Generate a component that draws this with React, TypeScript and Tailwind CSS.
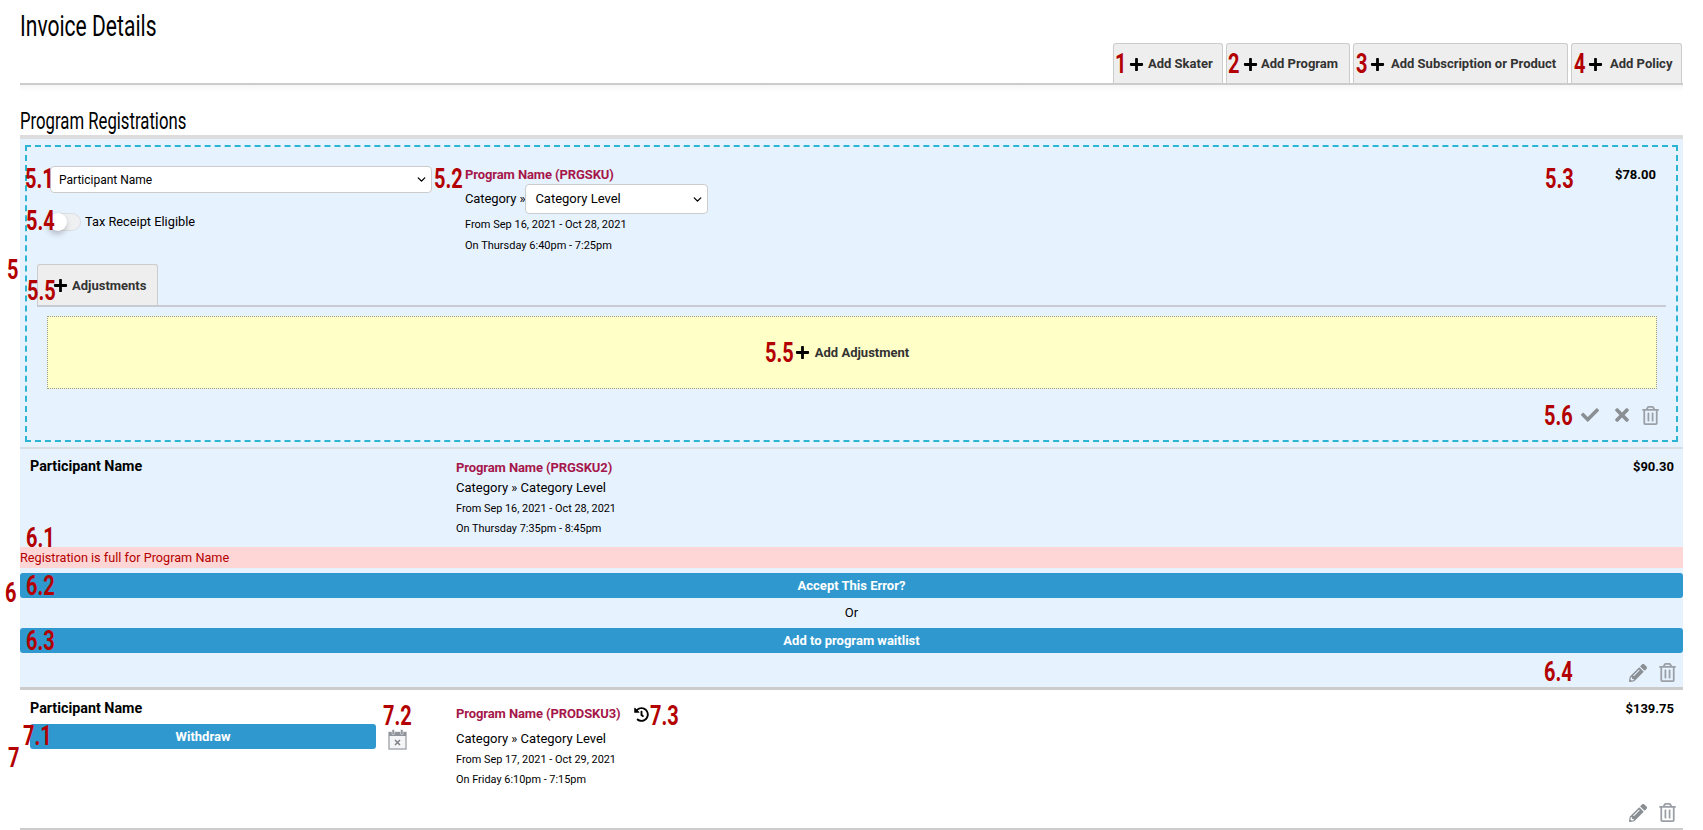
import { FaCheck, FaHistory, FaPencilAlt, FaPlus, FaRegTrashAlt, FaTimes } from "react-icons/fa"
import { ChevronDown } from "lucide-react"

type NoteProps = {
    text: string
    className: string
}

// the red numbers lie over the page, they are annotations on the screenshot
function Note(props: NoteProps) {
    return (
        <span className={`absolute origin-left scale-x-[0.74] text-[27px] leading-[19px] font-bold text-[#b30000] ${props.className}`}>
            {props.text}
        </span>
    )
}

function TabButton(props: { label: string; className: string; gap: string }) {
    return (
        <div className={`h-10 flex items-center bg-[#eeeeee] border border-b-0 border-[#cccccc] rounded-t-[3px] ${props.className}`}>
            <FaPlus className="text-black text-[15px] shrink-0 mt-[1px]" />
            <span className={`mt-[1px] text-[13px] font-bold text-[#333333] whitespace-nowrap ${props.gap}`}>{props.label}</span>
        </div>
    )
}

function ProgramInfo(props: { name: string; from: string; on: string; className?: string }) {
    return (
        <div className={`flex flex-col items-start ${props.className ?? ""}`}>
            <span className="text-[13px] leading-5 font-bold text-[#a5174a] tracking-[-0.1px]">{props.name}</span>
            <span className="text-[13px] leading-5 text-black">Category » Category Level</span>
            <span className="mt-[1px] text-[10.9px] leading-5 text-black">{props.from}</span>
            <span className="text-[10.9px] leading-[19px] text-black">{props.on}</span>
        </div>
    )
}

function TrashIcon() {
    return <FaRegTrashAlt className="text-[#9aa0a6] text-[19px]" />
}

function EditActions() {
    return (
        <div className="flex justify-end items-center gap-[11px] pr-[6px]">
            <FaPencilAlt className="text-[#8a8f94] text-[18px]" />
            <TrashIcon />
        </div>
    )
}

function BlueButton(props: { label: string; className: string }) {
    return (
        <div className={`h-[25px] flex justify-center items-center bg-[#2f99cf] rounded-[3px] text-white text-[13px] font-bold ${props.className}`}>
            {props.label}
        </div>
    )
}

export default function App() {
    return (
        <div className="relative w-full h-[830px] overflow-hidden bg-white px-5 font-['Roboto',sans-serif]">
            <div className="h-[43px] pt-[9px]">
                <h1 className="inline-block origin-left scale-x-[0.727] text-[29px] leading-[34px] whitespace-nowrap text-black">Invoice Details</h1>
            </div>

            <div className="flex justify-end gap-[3px] pr-[1px] border-b-2 border-[#cccccc]">
                <TabButton label="Add Skater" className="w-[110px] pl-[15px]" gap="ml-[4px]" />
                <TabButton label="Add Program" className="w-[124px] pl-[16px]" gap="ml-[3px]" />
                <TabButton label="Add Subscription or Product" className="w-[215px] pl-[16px]" gap="ml-[6px]" />
                <TabButton label="Add Policy" className="w-[111px] pl-[16px]" gap="ml-[7px]" />
            </div>
            <div className="h-[7px] bg-gradient-to-b from-[#f6f6f6] to-white"></div>

            <div className="h-[43px] pt-[16px]">
                <h2 className="inline-block origin-left scale-x-[0.727] text-[23px] leading-[27px] whitespace-nowrap text-black">Program Registrations</h2>
            </div>

            <div className="h-[555px] bg-[#e7f2ff] border-t-4 border-b-[3px] border-t-[#dddddd] border-b-[#cccccc] pt-[6px] flex flex-col">
                <div className="mx-[5px] h-[297px] border-2 border-dashed border-[#2cb5d2] flex flex-col">
                    <div className="flex h-[117px] pt-[19px] pl-[23px] pr-[20px]">
                        <div className="w-[382px] flex flex-col items-stretch">
                            <div className="h-[27px] flex justify-between items-center bg-white border border-[#cccccc] rounded-[4px] pl-[8px] pr-[3px]">
                                <span className="text-[12px] text-black">Participant Name</span>
                                <ChevronDown size={13} strokeWidth={2.5} className="text-black" />
                            </div>
                            <div className="mt-[20px] flex items-center">
                                <div className="relative w-[31px] h-[18px] rounded-full bg-[#eef0f2] border border-[#dcdfe3]">
                                    <div className="absolute left-[-2px] top-[-1px] w-[18px] h-[18px] rounded-full bg-white shadow-[-1px_3px_6px_rgba(0,0,0,0.25)]"></div>
                                </div>
                                <span className="ml-[4px] mt-[-1px] text-[12.8px] text-black">Tax Receipt Eligible</span>
                            </div>
                        </div>
                        <div className="ml-[33px] flex flex-col items-start">
                            <span className="h-[19px] mt-[-1px] text-[13px] leading-[19px] font-bold text-[#a5174a] tracking-[-0.1px]">Program Name (PRGSKU)</span>
                            <div className="flex items-center">
                                <span className="text-[13px] tracking-[-0.1px] text-black">Category »</span>
                                <div className="w-[183px] h-[30px] flex justify-between items-center bg-white border border-[#cccccc] rounded-[4px] pl-[9px] pr-[3px]">
                                    <span className="text-[13px] text-black">Category Level</span>
                                    <ChevronDown size={13} strokeWidth={2.5} className="text-black" />
                                </div>
                            </div>
                            <span className="text-[11px] leading-[21px] text-black">From Sep 16, 2021 - Oct 28, 2021</span>
                            <span className="text-[11px] leading-[21px] text-black">On Thursday 6:40pm - 7:25pm</span>
                        </div>
                        <span className="ml-auto mt-[-1px] text-[13px] leading-[19px] font-bold text-black">$78.00</span>
                    </div>

                    <div className="mx-[10px] flex border-b-2 border-[#c8ccd2]">
                        <div className="w-[121px] h-[41px] flex items-center bg-[#eeeeee] border border-b-0 border-[#cccccc] rounded-t-[3px] pl-[15px]">
                            <FaPlus className="text-black text-[15px] mt-[1px]" />
                            <span className="ml-[4px] mt-[1px] text-[13px] font-bold text-[#333333]">Adjustments</span>
                        </div>
                    </div>

                    <div className="mt-[9px] ml-[20px] mr-[19px] h-[73px] flex justify-center items-center bg-[#ffffc8] border border-dotted border-[#999999]">
                        <div className="flex items-center">
                            <FaPlus className="text-black text-[15px]" />
                            <span className="ml-[5px] text-[13px] font-bold text-[#333333]">Add Adjustment</span>
                        </div>
                    </div>

                    <div className="mt-[16px] flex justify-end items-center pr-[16px]">
                        <FaCheck className="text-[#8a8f94] text-[18px]" />
                        <FaTimes className="ml-[13px] text-[#8a8f94] text-[20px]" />
                        <div className="ml-[9px]"><TrashIcon /></div>
                    </div>
                </div>

                <div className="mt-[5px] h-[100px] border-t-2 border-[#d8dde4] flex pl-[10px] pr-[9px] pt-[9px]">
                    <span className="w-[426px] mt-[-1px] text-[14.3px] leading-[18px] font-bold text-black">Participant Name</span>
                    <ProgramInfo name="Program Name (PRGSKU2)" from="From Sep 16, 2021 - Oct 28, 2021" on="On Thursday 7:35pm - 8:45pm" />
                    <span className="ml-auto text-[13px] leading-[18px] font-bold text-black">$90.30</span>
                </div>

                <div className="h-[21px] flex items-center bg-[#ffd6d6] text-[12.7px] text-[#b30000]">Registration is full for Program Name</div>
                <BlueButton label="Accept This Error?" className="mt-[5px]" />
                <div className="h-[30px] flex justify-center items-center text-[13px] text-black">Or</div>
                <BlueButton label="Add to program waitlist" className="" />
                <div className="mt-[10px]"><EditActions /></div>
            </div>

            <div className="h-[140px] border-b-2 border-[#cccccc] flex flex-col">
                <div className="flex pl-[10px] pr-[9px] pt-[9px]">
                    <div className="w-[346px] flex flex-col items-stretch">
                        <span className="text-[14.3px] leading-[18px] font-bold text-black">Participant Name</span>
                        <BlueButton label="Withdraw" className="mt-[7px]" />
                    </div>
                    <svg width="19" height="21" viewBox="0 0 19 21" className="ml-[12px] mt-[30px]">
                        <rect x="1" y="3.5" width="17" height="16.5" fill="#f4f5f6" stroke="#a8adb2" strokeWidth="1.5" />
                        <rect x="1" y="3" width="17" height="4" fill="#8f949a" />
                        <rect x="4" y="0.5" width="2.5" height="5" rx="1" fill="#8f949a" stroke="#ffffff" strokeWidth="0.5" />
                        <rect x="12.5" y="0.5" width="2.5" height="5" rx="1" fill="#8f949a" stroke="#ffffff" strokeWidth="0.5" />
                        <path d="M7 11l5 5M12 11l-5 5" stroke="#7c8187" strokeWidth="1.5" />
                    </svg>
                    <div className="ml-[49px] mt-[5px] flex flex-col items-start">
                        <div className="flex items-center h-[20px]">
                            <span className="text-[13px] font-bold text-[#a5174a] tracking-[-0.1px]">Program Name (PRODSKU3)</span>
                            <FaHistory className="ml-[13px] text-black text-[15px]" />
                        </div>
                        <span className="mt-[5px] text-[13px] leading-5 text-black">Category » Category Level</span>
                        <span className="mt-[1px] text-[10.9px] leading-5 text-black">From Sep 17, 2021 - Oct 29, 2021</span>
                        <span className="text-[10.9px] leading-5 text-black">On Friday 6:10pm - 7:15pm</span>
                    </div>
                    <span className="ml-auto text-[13px] leading-[20px] font-bold text-black">$139.75</span>
                </div>
                <div className="mt-auto mb-[6px]"><EditActions /></div>
            </div>

            <Note text="1" className="left-[1115px] top-[55px]" />
            <Note text="2" className="left-[1228px] top-[55px]" />
            <Note text="3" className="left-[1356px] top-[55px]" />
            <Note text="4" className="left-[1574px] top-[55px]" />
            <Note text="5.1" className="left-[25px] top-[170px]" />
            <Note text="5.2" className="left-[434px] top-[170px]" />
            <Note text="5.3" className="left-[1545px] top-[170px]" />
            <Note text="5.4" className="left-[26px] top-[212px]" />
            <Note text="5" className="left-[7px] top-[261px]" />
            <Note text="5.5" className="left-[27px] top-[282px]" />
            <Note text="5.5" className="left-[765px] top-[344px]" />
            <Note text="5.6" className="left-[1544px] top-[407px]" />
            <Note text="6.1" className="left-[26px] top-[529px]" />
            <Note text="6.2" className="left-[26px] top-[577px]" />
            <Note text="6" className="left-[5px] top-[584px]" />
            <Note text="6.3" className="left-[26px] top-[632px]" />
            <Note text="6.4" className="left-[1544px] top-[663px]" />
            <Note text="7.2" className="left-[383px] top-[707px]" />
            <Note text="7.3" className="left-[650px] top-[707px]" />
            <Note text="7.1" className="left-[23px] top-[727px]" />
            <Note text="7" className="left-[8px] top-[749px]" />
        </div>
    )
}
